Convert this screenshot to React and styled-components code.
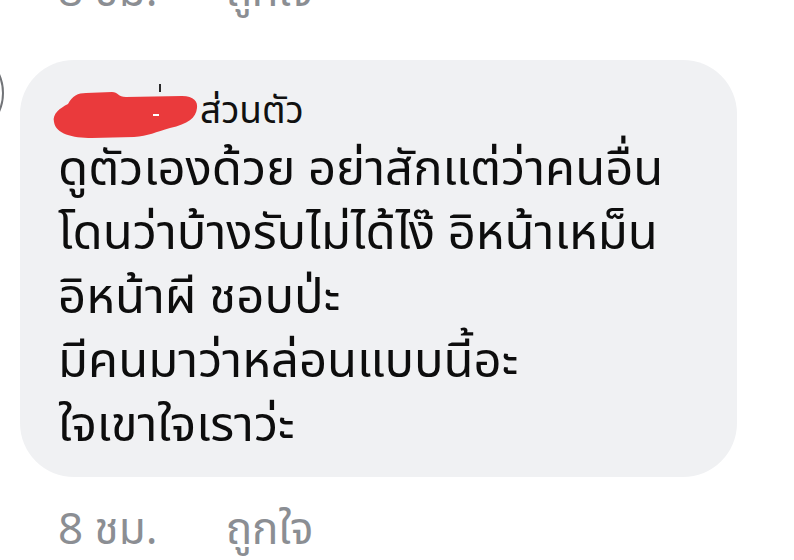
import React from "react";
import styled, { createGlobalStyle } from "styled-components";

const Global = createGlobalStyle`
  html, body { margin: 0; padding: 0; background: #ffffff; }
  body { font-family: "Noto Sans Thai", "Noto Sans", "DejaVu Sans", sans-serif; }
`;

const Page = styled.div`
  width: 794px;
  height: 560px;
  overflow: hidden;
  background: #ffffff;
  display: flex;
  flex-direction: column;
`;

const Meta = styled.div`
  display: flex;
  align-items: baseline;
  gap: 68px;
  padding-left: 58px;
  margin-top: ${(p) => p.$top}px;
  height: 48px;
  font-size: 44px;
  line-height: 48px;
  color: #8b8e93;
  white-space: nowrap;
  flex: none;
`;

const CommentRow = styled.div`
  display: flex;
  align-items: flex-start;
  margin-top: ${(p) => p.$top}px;
  flex: none;
`;

const Avatar = styled.div`
  flex: none;
  width: 90px;
  height: 90px;
  margin-left: -86px;
  margin-top: -12px;
  margin-right: 16px;
  border-radius: 50%;
  box-sizing: border-box;
  border: 2px solid #727478;
`;

const Bubble = styled.div`
  width: 717px;
  height: 417px;
  box-sizing: border-box;
  background: #f0f1f3;
  border-radius: 54px;
  padding: 28px 0 0 38px;
`;

const Header = styled.div`
  display: flex;
  align-items: center;
  height: 48px;
  font-size: 37px;
  color: #111111;
`;

const Redacted = styled.svg`
  flex: none;
  width: 143px;
  height: 48px;
  margin-left: -6px;
  margin-right: 5px;
  overflow: visible;
`;

const Body = styled.div`
  margin-top: 2px;
  font-size: 49px;
  line-height: 64px;
  color: #0d0d0d;
  white-space: nowrap;
`;

const Line = styled.div``;

export default function App() {
  const lines = [
    "ดูตัวเองด้วย อย่าสักแต่ว่าคนอื่น",
    "โดนว่าบ้างรับไม่ได้ไง๊ อิหน้าเหม็น",
    "อิหน้าผี ชอบป่ะ",
    "มีคนมาว่าหล่อนแบบนี้อะ",
    "ใจเขาใจเราว่ะ",
  ];
  return (
    <Page>
      <Global />
      <Meta $top={-31}>
        <span>8 ชม.</span>
        <span>ถูกใจ</span>
      </Meta>
      <CommentRow $top={43}>
        <Avatar />
        <Bubble>
          <Header>
            <Redacted viewBox="0 0 143 48">
              <rect x="107" y="-4" width="2" height="8" fill="#2a2a2a" />
              <path
                d="M2 34 C0 26 8 20 16 16 C20 8 26 5 34 5 L60 4 C66 4 66 9 74 9 L130 8 C142 8 146 14 145 20 C144 30 136 36 118 40 C104 44 96 48 82 49 L40 50 C20 50 4 46 2 34 Z"
                fill="#ea3a3c"
              />
              <rect x="101" y="26" width="6" height="2" fill="#ffffff" />
            </Redacted>
            <span>ส่วนตัว</span>
          </Header>
          <Body>
            {lines.map((l) => (
              <Line key={l}>{l}</Line>
            ))}
          </Body>
        </Bubble>
      </CommentRow>
      <Meta $top={30}>
        <span>8 ชม.</span>
        <span>ถูกใจ</span>
      </Meta>
    </Page>
  );
}
